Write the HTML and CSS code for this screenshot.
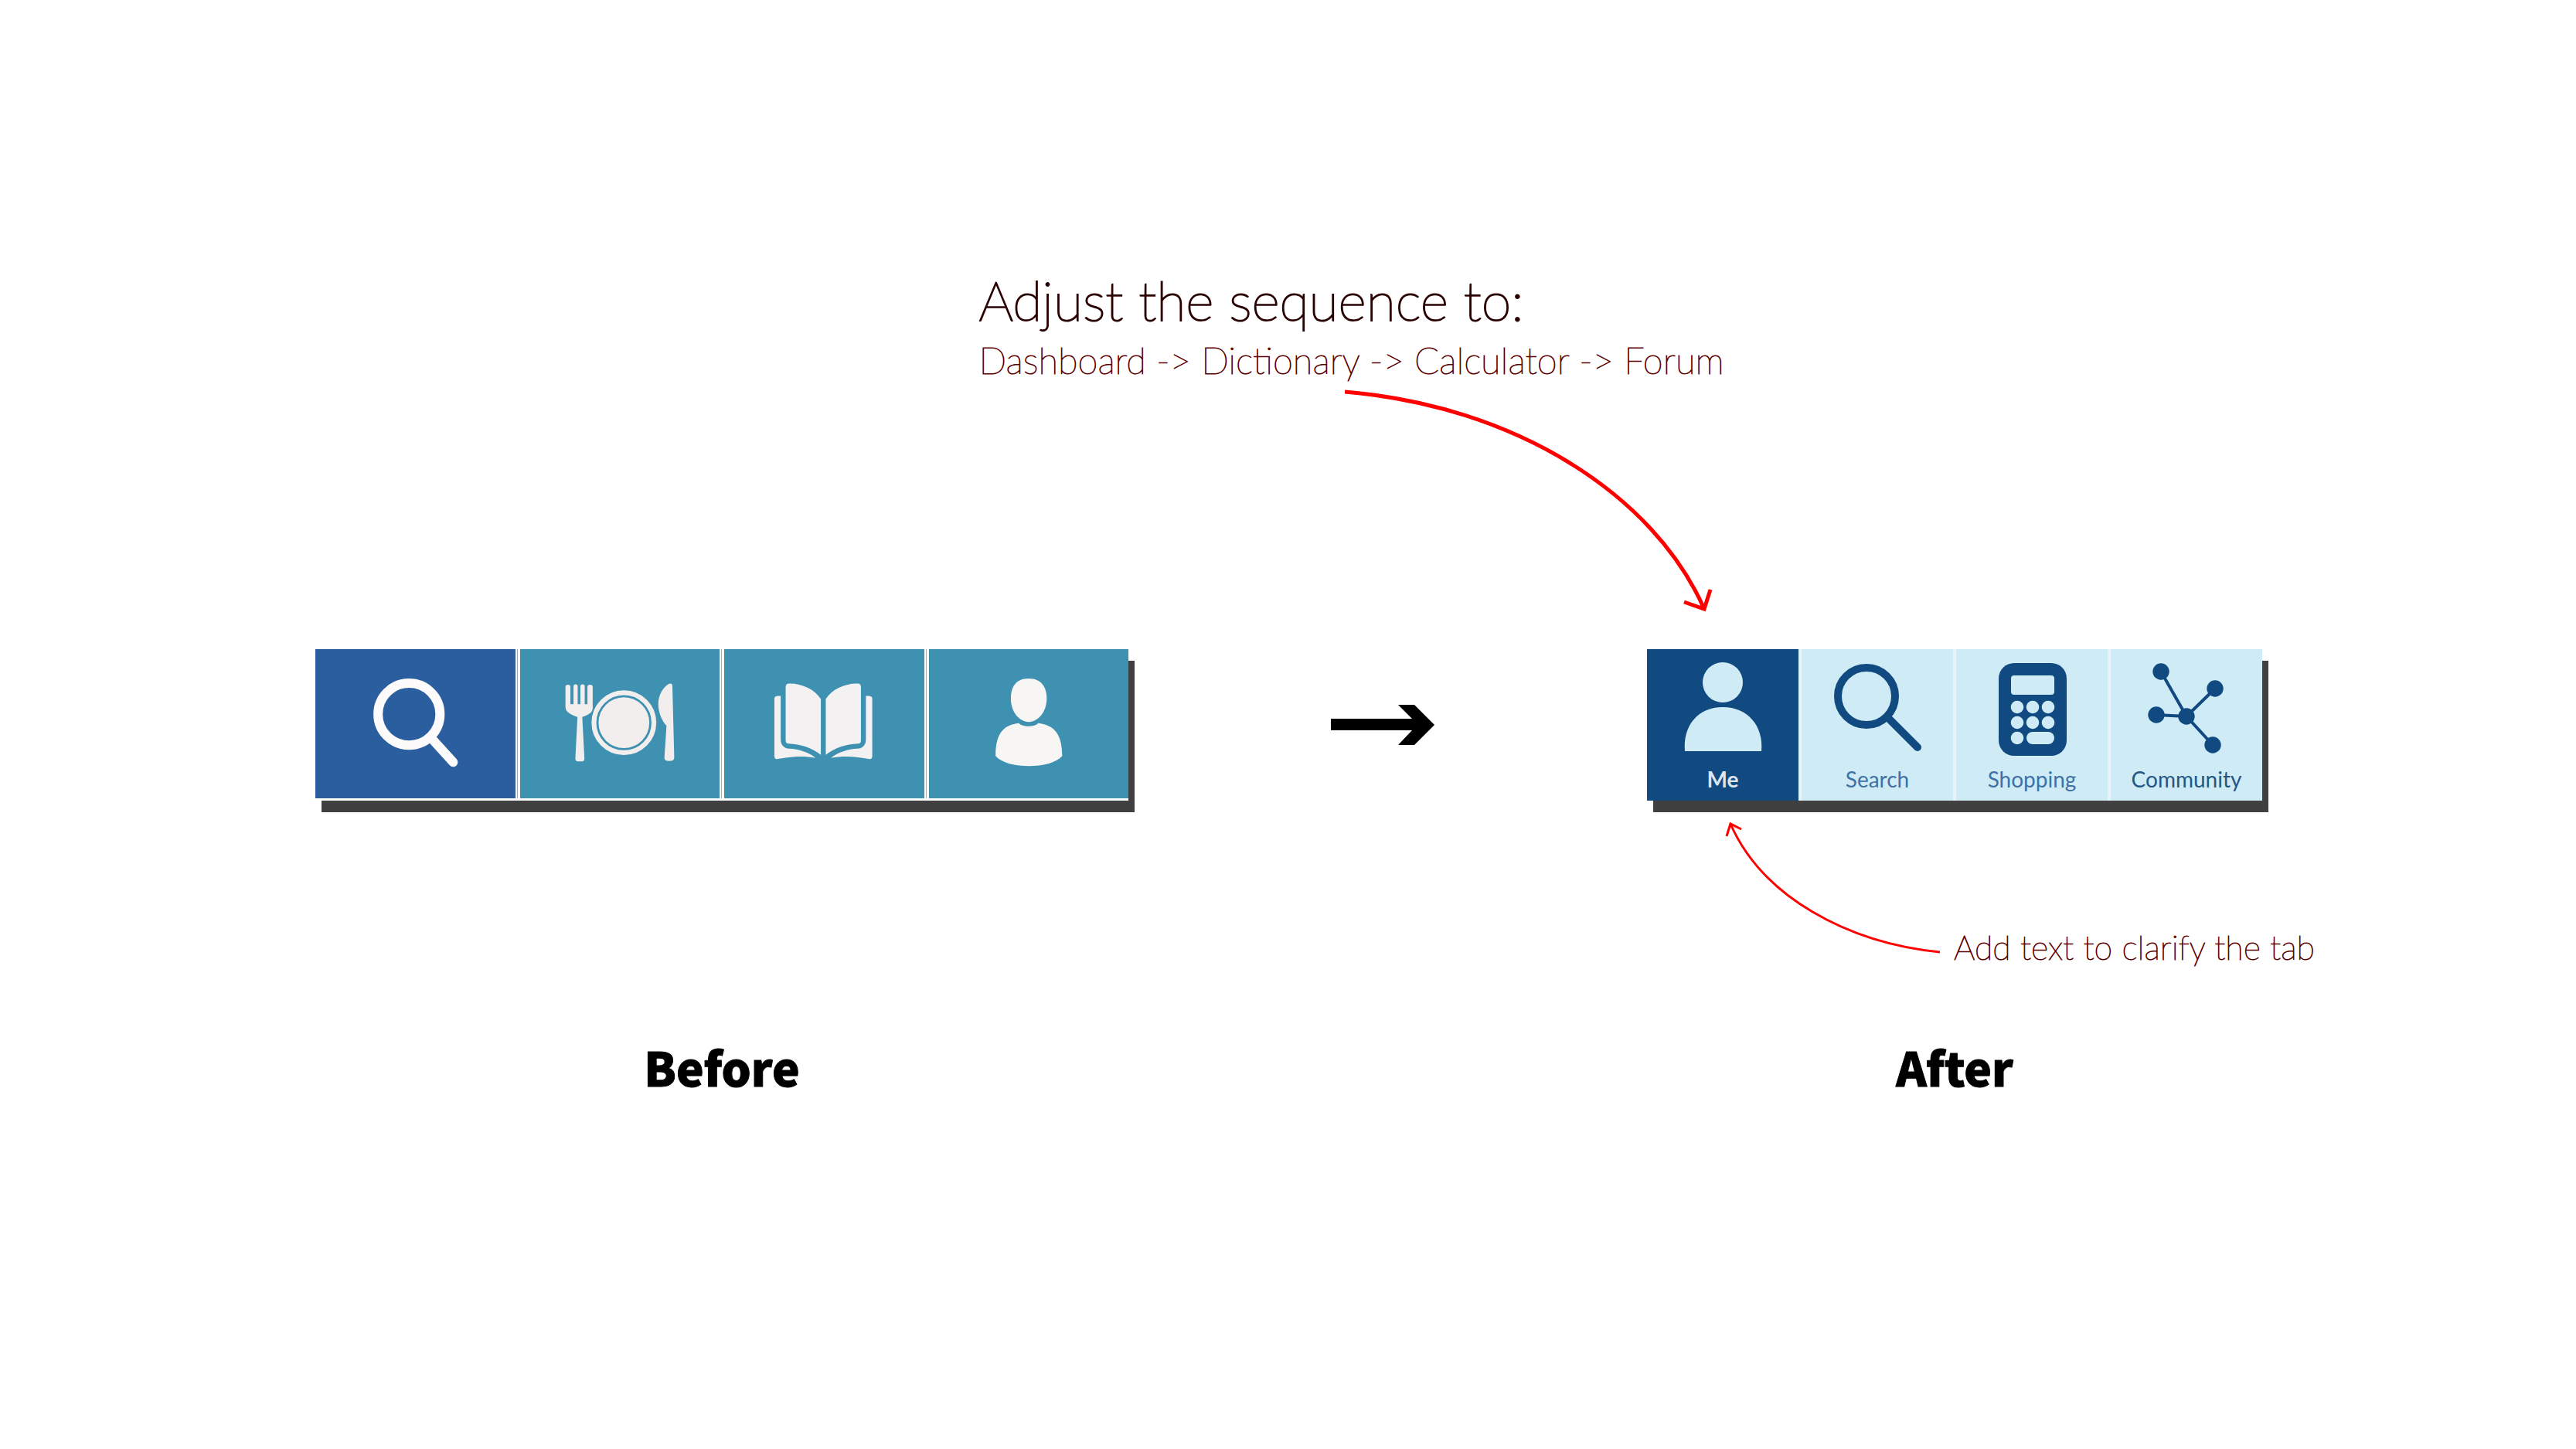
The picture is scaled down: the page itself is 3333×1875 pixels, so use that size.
FILE: index.html
```html
<!DOCTYPE html>
<html lang="en">
<head>
<meta charset="utf-8">
<meta name="viewport" content="width=device-width, initial-scale=1">
<title>Tab bar: before and after</title>
<link rel="stylesheet" href="styles.css">
</head>
<body>
<main class="board">
  <section class="sequence-note">
    <h1 class="note note-large">Adjust the sequence to:</h1>
    <p class="note note-medium">Dashboard -&gt; Dictionary -&gt; Calculator -&gt; Forum</p>
  </section>
  <div class="sequence-pointer">
    <svg class="pointer" viewBox="0 0 480 300" aria-hidden="true">
      <path class="stroke-wide" d="M0 7C220 25 400 140 465 288M439 279L465 288L473 263"/>
    </svg>
  </div>

  <div class="comparison">
    <nav class="tabs tabs-before" aria-label="Before">
      <button class="tab tab-active" type="button" aria-label="Search">
        <svg class="icon" viewBox="0 0 258 193"><g fill="none" stroke="#fdfafb"><circle cx="121" cy="84" r="40" stroke-width="12"/><path d="M149 114L178 146" stroke-width="12" stroke-linecap="round"/></g></svg>
      </button>
      <button class="tab" type="button" aria-label="Food">
        <svg class="icon" viewBox="0 0 258 193" fill="#f2eeee">
          <circle cx="134" cy="95" r="38.700" fill="none" stroke="#f2eeee" stroke-width="6.200"/>
          <circle cx="134" cy="95" r="32.800"/>
          <path d="M58.500 49q0-3 3.200-3t3.200 3V71h4V48q0-2.500 2.700-2.500t2.700 2.500V71h3.500V48q0-2.500 2.800-2.500t2.800 2.500V71h3.500V49q0-3 3.400-3t3.400 3V76c0 6-7 10-13.500 11.500L83 141q0 4-3 4h-5.500q-3.500 0-3.200-4L74 87.500C66 85 58.500 81 58.500 75z"/>
          <path d="M192 45q4.500-2 4.600 3L199 140q0 4.500-6.500 4.500t-6.200-4.500L189 99C182 91 178.400 80 178.400 71 178.400 59 185 49 192 45z"/>
        </svg>
      </button>
      <button class="tab" type="button" aria-label="Diary">
        <svg class="icon" viewBox="0 0 258 193" fill="#f4f1f3">
          <g id="leaf">
            <path d="M79.400 49q0-4.500 4-4.500C100 44 117 52 124.800 64.500V136.500C113 127 99 123 83 122q-3.600 0-3.600-4z"/>
            <path d="M64.800 64q0-3.500 5-3.500H73V117C73 124 78 128.500 84 128.500 96 129 109 133 118 140.500 100 137 85 139 68 142q-3.200 0-3.200-4z"/>
          </g>
          <use href="#leaf" transform="matrix(-1 0 0 1 256 0)"/>
        </svg>
      </button>
      <button class="tab" type="button" aria-label="Profile">
        <svg class="icon" viewBox="0 0 258 193" fill="#f8f6f5">
          <path d="M128.700 38C145 38 152 49 152 64 152 81 141 94 128.700 94S105.700 81 105.700 64C105.700 49 112 38 128.700 38z"/>
          <path d="M116 95.500C120 101 137 101 141 95.500 159 98 172 106 172 138 164 147 147 151 129 151S94 147 86 138C86 106 98 98 116 95.500z"/>
        </svg>
      </button>
    </nav>

    <svg class="step-arrow" viewBox="0 0 134 52" aria-hidden="true">
      <path d="M0 18H105L87 0H108L134 26L108 52H87L105 33H0z"/>
    </svg>

    <nav class="tabs tabs-after" aria-label="After">
      <button class="tab tab-active" type="button">
        <svg class="icon" viewBox="0 0 196 144" aria-hidden="true" fill="#cfebf5"><circle cx="98" cy="43" r="26"/><path d="M49 132C46 99 66 75 98 75S151 99 148 132z"/></svg>
        <span class="tab-label">Me</span>
      </button>
      <button class="tab" type="button">
        <svg class="icon" viewBox="0 0 196 144" aria-hidden="true" fill="none" stroke="#104a80" stroke-width="10"><circle cx="84" cy="61" r="37"/><path d="M111 88L150 127" stroke-linecap="round"/></svg>
        <span class="tab-label">Search</span>
      </button>
      <button class="tab" type="button">
        <svg class="icon" viewBox="0 0 196 144" aria-hidden="true" fill="#cfebf5">
          <rect x="55" y="18" width="88" height="120" rx="20" fill="#104a80"/>
          <rect x="71" y="34" width="56" height="25" rx="4"/>
          <circle cx="79" cy="75" r="8.300"/><circle cx="99" cy="75" r="8.300"/><circle cx="119" cy="75" r="8.300"/>
          <circle cx="79" cy="95" r="8.300"/><circle cx="99" cy="95" r="8.300"/><circle cx="119" cy="95" r="8.300"/>
          <circle cx="79" cy="115" r="8.300"/><rect x="91" y="107" width="36" height="16" rx="8"/>
        </svg>
        <span class="tab-label">Shopping</span>
      </button>
      <button class="tab" type="button">
        <svg class="icon" viewBox="0 0 196 144" aria-hidden="true" fill="#104a80">
          <path d="M65 29L98 87L135 51M59 85L98 87L132 124" fill="none" stroke="#104a80" stroke-width="4"/>
          <circle cx="65" cy="29" r="10.700"/><circle cx="135" cy="51" r="10.700"/><circle cx="98" cy="87" r="10.700"/><circle cx="59" cy="85" r="10.700"/><circle cx="132" cy="124" r="10.700"/>
        </svg>
        <span class="tab-label tab-label-strong">Community</span>
      </button>
    </nav>
  </div>

  <div class="label-note">
    <svg class="pointer" viewBox="0 0 280 196" aria-hidden="true">
      <path class="stroke-thin" d="M280 170C160 158 50 98 9 4M4 20L9 4L23 11"/>
    </svg>
    <p class="note note-small">Add text to clarify the tab</p>
  </div>

  <div class="captions">
    <h2 class="caption caption-before">Before</h2>
    <h2 class="caption caption-after">After</h2>
  </div>
</main>
</body>
</html>
```
FILE: styles.css
```css
* {
  box-sizing: border-box;
}

body {
  margin: 0;
  background: #fff;
  color: #000;
  font-family: Lato, "Open Sans", sans-serif;
}

.board {
  padding: 340px 0 160px;
}

h1,
h2,
p {
  margin: 0;
}

/* Handwritten-style annotations */
.note {
  color: #5c0000;
  font-weight: 100;
  white-space: nowrap;
  -webkit-text-stroke: 1px #5c0000;
}

.note-large {
  color: #2a0000;
  font-size: 70px;
  line-height: 96px;
  -webkit-text-stroke: 2px #2a0000;
}

.note-medium {
  font-size: 47px;
  line-height: 60px;
}

.note-small {
  font-size: 43px;
  line-height: 64px;
}

.sequence-note {
  padding-left: 38%;
}

.sequence-pointer {
  display: grid;
  grid-template-columns: 1740fr 480fr 1113fr;
  margin: 4px 0 40px;
}

.sequence-pointer .pointer {
  grid-column: 2;
}

.pointer {
  display: block;
  width: 100%;
  fill: none;
  stroke: #f00;
}

.stroke-wide {
  stroke-width: 5px;
}

.stroke-thin {
  stroke-width: 3px;
}

/* The two tab bars and the arrow between them */
.comparison,
.captions {
  display: grid;
  grid-template-columns: 408fr 1052fr 262fr 134fr 275fr 796fr 406fr;
  align-items: center;
}

.tabs {
  display: grid;
  grid-template-columns: repeat(4, 1fr);
  box-shadow: 8px 15px #404040;
}

.tab {
  display: flex;
  flex-direction: column;
  min-width: 0;
  padding: 0;
  border: 0;
  font: inherit;
  cursor: pointer;
}

.icon {
  display: block;
  width: 100%;
}

.tabs-before {
  grid-column: 2;
  gap: 6px;
  padding-bottom: 3px;
  background: #fff;
}

.tabs-before .tab {
  background: #3e91b0;
  box-shadow: 2px 0 #fff, 3px 0 #aaa;
}

.tabs-before .tab:last-child {
  box-shadow: none;
}

.tabs-before .tab-active {
  background: #2a5e9e;
}

.step-arrow {
  grid-column: 4;
  display: block;
  width: 100%;
}

.tabs-after {
  grid-column: 6;
  gap: 4px;
  background: #e6f4fa;
}

.tabs-after .tab {
  background: #cfebf5;
  color: #3f71a5;
}

.tabs-after .tab-active {
  background: #104a80;
  color: #dce6f0;
  font-weight: 700;
}

.tab-label {
  width: 100%;
  padding: 4px 0 8px;
  font-size: 28px;
  line-height: 40px;
  text-align: center;
}

.tab-label-strong {
  color: #245784;
}

.label-note {
  display: grid;
  grid-template-columns: 2230fr 280fr 823fr;
  align-items: end;
  padding-top: 26px;
}

.label-note .pointer {
  grid-column: 2;
}

.label-note .note {
  padding-left: 18px;
}

.captions {
  padding-top: 78px;
}

.caption {
  font-family: "Noto Sans CJK SC", "Noto Sans", sans-serif;
  font-size: 60px;
  font-weight: 900;
  line-height: 88px;
  text-align: center;
  -webkit-text-stroke: 1px #000;
}

.caption-before {
  grid-column: 2;
}

.caption-after {
  grid-column: 6;
}
```
